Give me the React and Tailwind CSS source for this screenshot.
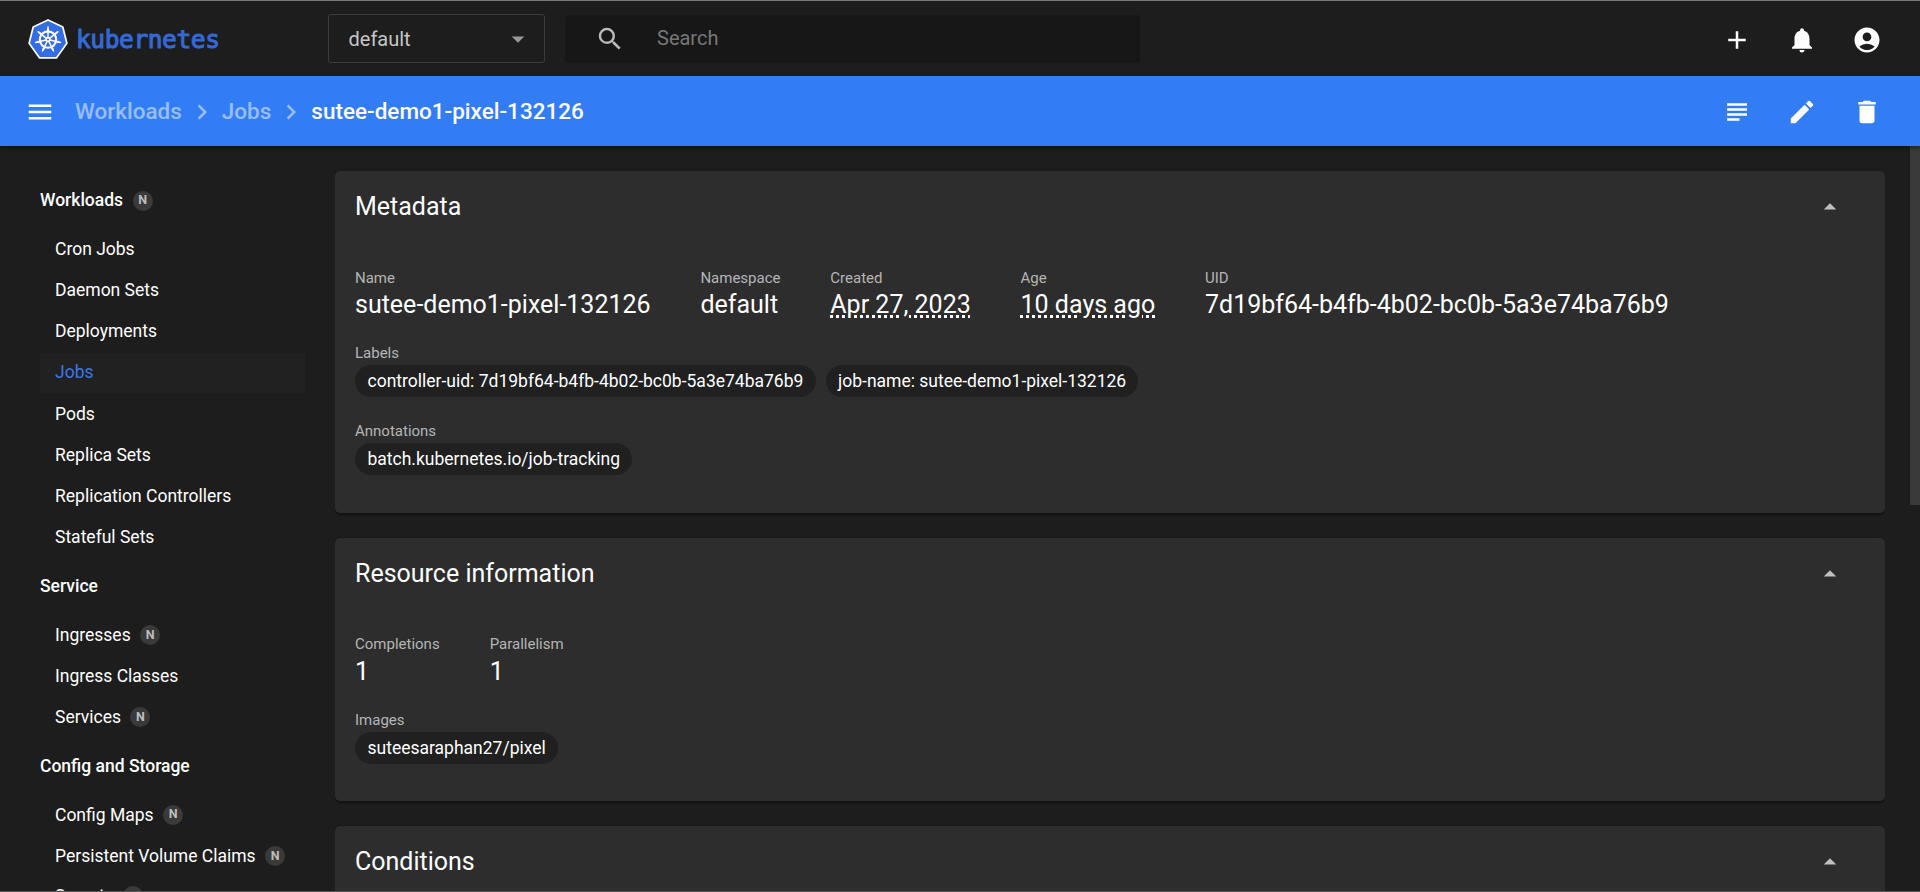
import { useState } from "react";
import {
  MdAdd,
  MdNotifications,
  MdAccountCircle,
  MdSubject,
  MdEdit,
  MdDelete,
  MdMenu,
  MdSearch,
  MdArrowDropUp,
  MdArrowDropDown,
  MdChevronRight,
} from "react-icons/md";

const sections = [
  {
    title: "Workloads",
    badge: true,
    items: [
      ["Cron Jobs"],
      ["Daemon Sets"],
      ["Deployments"],
      ["Jobs"],
      ["Pods"],
      ["Replica Sets"],
      ["Replication Controllers"],
      ["Stateful Sets"],
    ],
  },
  { title: "Service", items: [["Ingresses", true], ["Ingress Classes"], ["Services", true]] },
  {
    title: "Config and Storage",
    items: [["Config Maps", true], ["Persistent Volume Claims", true], ["Secrets", true]],
  },
];

// One spoke of the helm per side of the heptagon.
const spokes = [0, 1, 2, 3, 4, 5, 6].map((i) => (i * 360) / 7);

function Logo() {
  return (
    <div className="flex w-[300px] items-center pt-px">
      <svg viewBox="0 0 40 40" className="h-10 w-10">
        <path
          d="M20 .9 34.8 8 38.9 24.2 28.6 38.8H11.4L1.1 24.2 5.2 8Z"
          fill="#326de6"
          stroke="#fff"
          strokeWidth="1.7"
          strokeLinejoin="round"
        />
        <g stroke="#fff" fill="none" strokeLinecap="round">
          <circle cx="20" cy="20.6" r="8.2" strokeWidth="2.1" />
          {spokes.map((a) => (
            <g key={a} transform={`rotate(${a} 20 20.6)`}>
              <path d="M20 18.6V7.9" strokeWidth="1.5" />
              <path d="M20 11.6V9.6" strokeWidth="1.9" />
            </g>
          ))}
          <circle cx="20" cy="20.6" r="1.9" strokeWidth="1.5" />
        </g>
      </svg>
      <span className="ml-2 pt-[3px] font-['DejaVu_Sans_Mono',monospace] text-[24.5px] leading-none tracking-[-0.4px] text-[#3369d8] [-webkit-text-stroke:1px_#3369d8]">
        kubernetes
      </span>
    </div>
  );
}

function Badge() {
  return (
    <span className="ml-[9.5px] flex size-5 items-center justify-center rounded-full bg-[#3a3a3a] text-[12.5px] font-bold text-[#bdbdbd]">
      N
    </span>
  );
}

function Card({ title, className = "", children }) {
  const [open, setOpen] = useState(true);
  return (
    <section className={"shrink-0 rounded-[5px] bg-[#2d2d2d] px-5 shadow-[0_2px_2px_rgba(0,0,0,0.35),0_0_3px_rgba(0,0,0,0.2)] " + className}>
      <header className="flex h-[70px] items-center justify-between pr-5 pt-[2px]">
        <h2 className="text-[25px]">{title}</h2>
        <button onClick={() => setOpen(!open)} className="text-[#c0c0c0]">
          <MdArrowDropUp className="size-[30px]" />
        </button>
      </header>
      {open && children}
    </section>
  );
}

function Property({ label, dotted, className = "leading-[34px]", children }) {
  return (
    <div>
      <div className="h-5 text-[15px] leading-5 text-[#b5b5b5]">{label}</div>
      <div className={"h-[30px] text-[25px] " + className}>
        <span
          className={
            dotted ? "underline decoration-dotted decoration-[2.5px] underline-offset-2" : ""
          }
        >
          {children}
        </span>
      </div>
    </div>
  );
}

function Chips({ label, items, className = "" }) {
  return (
    <div className={className}>
      <div className="h-[22px] text-[15px] leading-5 text-[#b5b5b5]">{label}</div>
      <div className="flex gap-2.5">
        {items.map((t) => (
          <span key={t} className="flex h-8 items-center rounded-full bg-[#202020] pl-[12.5px] pr-[12.2px] text-[17.5px]">
            {t}
          </span>
        ))}
      </div>
    </div>
  );
}

export default function App() {
  return (
    <div className="flex h-[892px] w-[1920px] flex-col overflow-hidden border-t border-b border-t-[#777] border-b-[#555] bg-[#1d1d1d] font-[Roboto,sans-serif] text-white">
      <header className="flex h-[75px] shrink-0 items-center pl-7 pr-[37.6px]">
        <Logo />
        <div className="flex h-[49px] w-[217px] items-center justify-between rounded-[3px] border border-[#3d3d3d] pl-[19.5px] pr-[11px] text-xl text-[#c5c5c5]">
          default
          <MdArrowDropDown className="size-[30px] text-[#999]" />
        </div>
        <div className="ml-5 flex h-12 w-[575px] items-center rounded-[3px] bg-[#171717] pl-[29.5px]">
          <MdSearch className="size-[30px] text-[#bbb]" />
          <span className="ml-[32.5px] pb-[2px] text-xl text-[#777]">Search</span>
        </div>
        <div className="ml-auto flex gap-[35px] pt-[2px]">
          <MdAdd className="size-[30px]" />
          <MdNotifications className="size-[30px]" />
          <MdAccountCircle className="size-[30px]" />
        </div>
      </header>

      <div className="z-10 flex h-[70px] shrink-0 items-center bg-[#327df5] pl-[25px] pr-[37.6px] pt-[2px] shadow-[0_2px_4px_rgba(0,0,0,0.4)]">
        <MdMenu className="size-[30px]" />
        <nav className="ml-5 flex items-center text-[22.5px] font-medium text-white/50">
          <span>Workloads</span>
          <MdChevronRight className="mx-[5px] size-[30px]" />
          <span>Jobs</span>
          <MdChevronRight className="mx-[5px] size-[30px]" />
          <span className="text-white">sutee-demo1-pixel-132126</span>
        </nav>
        <div className="ml-auto flex gap-[35px]">
          <MdSubject className="size-[30px]" />
          <MdEdit className="size-[30px]" />
          <MdDelete className="size-[30px]" />
        </div>
      </div>

      <div className="flex min-h-0 flex-1">
        <aside className="w-[335px] shrink-0 overflow-hidden pl-10 pr-[30px] pt-[28.6px] text-[17.5px]">
          {sections.map((s) => (
            <div key={s.title} className="mb-[3.2px]">
              <div className="mb-[2.4px] flex h-[52px] items-center font-medium">
                {s.title}
                {s.badge && <Badge />}
              </div>
              {s.items.map(([name, badge]) => (
                <div
                  key={name}
                  className={
                    "flex h-10 items-center pl-[15px] " +
                    (name === "Persistent Volume Claims" ? "mb-[0.2px] " : "mb-[1.2px] ") +
                    (name === "Jobs" ? "bg-[#212121] text-[#3b78e7]" : "")
                  }
                >
                  {name}
                  {badge && <Badge />}
                </div>
              ))}
            </div>
          ))}
        </aside>

        <main className="flex w-[1550px] flex-col gap-[25px] overflow-hidden pt-[25px]">
          <Card title="Metadata" className="h-[342px]">
            <div className="mt-[27px] flex gap-[49.8px]">
              <Property label="Name">sutee-demo1-pixel-132126</Property>
              <Property label="Namespace">default</Property>
              <Property label="Created" dotted>Apr 27, 2023</Property>
              <Property label="Age" dotted>10 days ago</Property>
              <Property label="UID">7d19bf64-b4fb-4b02-bc0b-5a3e74ba76b9</Property>
            </div>
            <Chips
              className="mt-[25px]"
              label="Labels"
              items={["controller-uid: 7d19bf64-b4fb-4b02-bc0b-5a3e74ba76b9", "job-name: sutee-demo1-pixel-132126"]}
            />
            <Chips className="mt-[24px]" label="Annotations" items={["batch.kubernetes.io/job-tracking"]} />
          </Card>
          <Card title="Resource information" className="h-[263px]">
            <div className="mt-[26px] flex gap-[50px]">
              <Property label="Completions" className="leading-[36px]">1</Property>
              <Property label="Parallelism" className="leading-[36px]">1</Property>
            </div>
            <Chips className="mt-[26px]" label="Images" items={["suteesaraphan27/pixel"]} />
          </Card>
          <Card title="Conditions" className="h-[200px]" />
        </main>

        <div className="ml-auto h-[359px] w-2.5 bg-[#3a3a3a]" />
      </div>
    </div>
  );
}
